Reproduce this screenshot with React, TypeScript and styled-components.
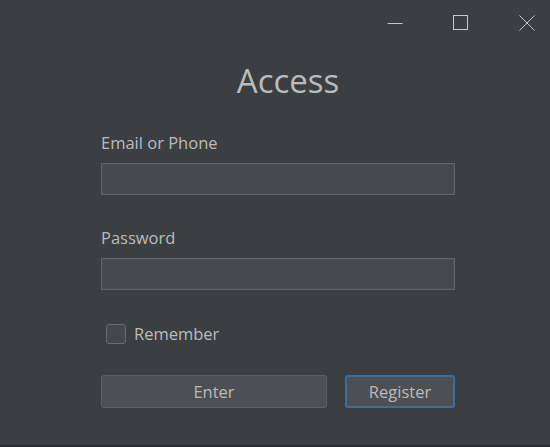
import React from "react";
import styled, { createGlobalStyle } from "styled-components";

const GlobalStyle = createGlobalStyle`
  html, body {
    margin: 0;
    padding: 0;
    background: #3c3f41;
  }
  * { box-sizing: border-box; }
`;

export default function App() {
  return (
    <>
      <GlobalStyle />
      <Window>
        <TitleBar>
          <WinButton aria-label="minimize">
            <svg width="16" height="16" viewBox="0 0 16 16">
              <line x1="0.5" y1="8.5" x2="15.5" y2="8.5" stroke="#c8c8c8" strokeWidth="1" />
            </svg>
          </WinButton>
          <WinButton aria-label="maximize">
            <svg width="16" height="16" viewBox="0 0 16 16">
              <rect x="0.5" y="0.5" width="14" height="14" fill="none" stroke="#c8c8c8" strokeWidth="1" />
            </svg>
          </WinButton>
          <WinButton aria-label="close">
            <svg width="16" height="16" viewBox="0 0 16 16">
              <path d="M0.5 0.5 L15.5 15.5 M15.5 0.5 L0.5 15.5" stroke="#c8c8c8" strokeWidth="1" />
            </svg>
          </WinButton>
        </TitleBar>

        <Form>
          <Title>Access</Title>
          <Label $top={29}>Email or Phone</Label>
          <Input type="text" />
          <Label $top={32}>Password</Label>
          <Input type="password" />
          <CheckRow>
            <CheckBox />
            <CheckText>Remember</CheckText>
          </CheckRow>
          <Buttons>
            <Button $wide>Enter</Button>
            <Button $focused>Register</Button>
          </Buttons>
        </Form>

        <StatusStrip />
      </Window>
    </>
  );
}

const Window = styled.div`
  height: 100vh;
  display: flex;
  flex-direction: column;
  background: #3c3f41;
  font-family: "Open Sans", "Noto Sans", sans-serif;
  color: #bbbbbb;
`;

const TitleBar = styled.div`
  display: flex;
  justify-content: flex-end;
  gap: 20px;
  height: 46px;
  padding-top: 15px;
`;

const WinButton = styled.div`
  width: 46px;
  height: 16px;
  display: flex;
  justify-content: center;
`;

const Form = styled.div`
  width: 354px;
  margin-left: 101px;
  display: flex;
  flex-direction: column;
  flex: 1;
`;

const Title = styled.h1`
  margin: 13px 0 0 20px;
  text-align: center;
  font-weight: 400;
  font-size: 33px;
  line-height: 44px;
  color: #bbbbbb;
`;

const Label = styled.label<{ $top?: number }>`
  margin-top: ${(p) => p.$top ?? 14}px;
  font-size: 16.5px;
  line-height: 22px;
  margin-bottom: 9px;
`;

const Input = styled.input`
  height: 32px;
  width: 100%;
  background: #45494a;
  border: 1px solid #646464;
  box-shadow: inset 0 0 0 1px #4b4f50;
  outline: none;
  color: #bbbbbb;
`;

const CheckRow = styled.div`
  display: flex;
  align-items: center;
  gap: 8px;
  margin-top: 33px;
  padding-left: 5px;
`;

const CheckBox = styled.span`
  width: 20px;
  height: 20px;
  border: 1px solid #6b6b6b;
  border-radius: 3px;
  background: #43494a;
`;

const CheckText = styled.span`
  font-size: 16.5px;
  line-height: 22px;
`;

const Buttons = styled.div`
  display: flex;
  justify-content: space-between;
  margin-top: 30px;
`;

const Button = styled.button<{ $wide?: boolean; $focused?: boolean }>`
  width: ${(p) => (p.$wide ? 226 : 110)}px;
  height: 33px;
  border-radius: 3px;
  background: #4c5052;
  color: #bbbbbb;
  font-family: inherit;
  font-size: 16.5px;
  border: ${(p) => (p.$focused ? "2px solid #3d6ca3" : "1px solid #5e6060")};
  padding: 0;
`;

const StatusStrip = styled.div`
  height: 2px;
  background: #2b2b2b;
`;
